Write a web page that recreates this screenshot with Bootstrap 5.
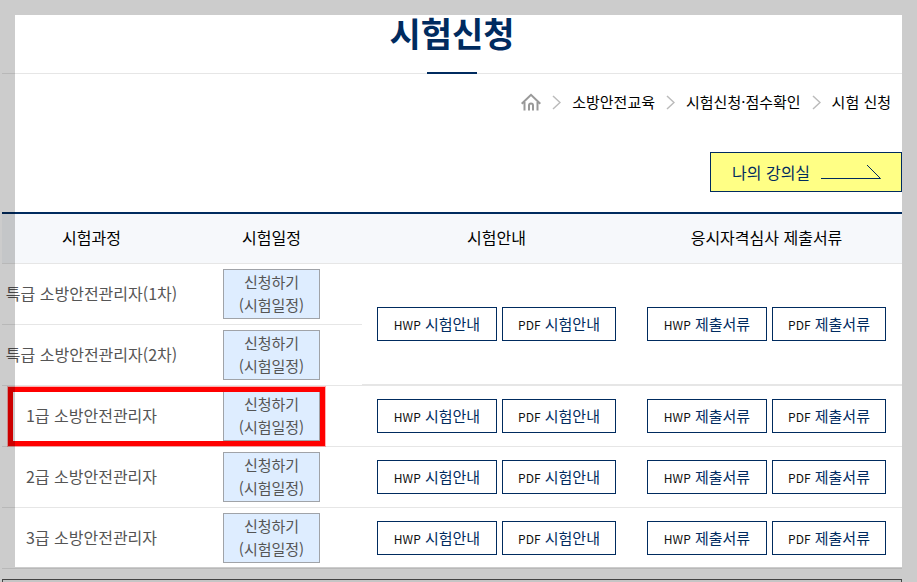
<!DOCTYPE html>
<html lang="ko">
<head>
<meta charset="utf-8">
<meta name="viewport" content="width=device-width, initial-scale=1">
<title>시험신청</title>
<link href="https://cdn.jsdelivr.net/npm/bootstrap@5.3.0/dist/css/bootstrap.min.css" rel="stylesheet">
<style>
:root { --navy: #002b5f; --rule: #e6e6e6; }
body { font-family: "Noto Sans CJK KR", sans-serif; font-size: 16px; font-weight: 400; color: #555; background: #fff; min-height: 100vh; overflow-x: hidden; }
.page-wrap { margin: 0 15px 0 2px; }
.page-head { height: 74px; border-bottom: 1px solid var(--rule); }
.page-head h1 { font-size: 34px; line-height: 40px; font-weight: 700; color: var(--navy); margin: 13px 0 0; }
.title-bar { width: 50px; height: 2px; background: var(--navy); margin: auto auto -1px; }
.crumbs { height: 56px; padding-right: 11px; gap: 11px; font-size: 15px; color: #000; }
.crumbs a { color: #000; text-decoration: none; }
.my-room { width: 192px; height: 40px; margin-top: 22px; background: #ffff85; border: 1px solid var(--navy); color: var(--navy); padding: 0 20px 0 21px; text-decoration: none; line-height: 24px; }
.exam-table { table-layout: fixed; border-top: 2px solid var(--navy); margin: 20px 0 0; color: #555; border-collapse: separate; border-spacing: 0; }
.exam-table th { background: #f6f8fb; color: #000; font-weight: inherit; height: 50px; padding: 0 1px 4px 0; border-bottom: 1px solid var(--rule); line-height: 24px; }
.exam-table td { height: 61px; padding: 0 1px 0 0; border-bottom: 1px solid var(--rule); white-space: nowrap; line-height: 24px; }
.exam-table td:first-child { padding-bottom: 2px; }
.exam-table td.shared { border-bottom-width: 2px; padding-bottom: 0; }
.col-a { width: 20%; } .col-b { width: 30%; }
.apply { width: 97px; height: 50px; background: #deedff; border: 1px solid #a0a3a8; color: #555; font-size: 15px; font-weight: inherit; line-height: 23px; padding: 0 0 5px; }
.doc { height: 34px; border: 1px solid var(--navy); background: #fff; color: var(--navy); font-size: 15px; font-weight: inherit; line-height: 20px; padding: 0; }
.doc small { font-size: 12px; color: #111; }
.doc-hwp { width: 120px; } .doc-pdf { width: 114px; }
.doc-pair { gap: 5px; }
.marker { position: absolute; left: 6px; top: 1px; bottom: 0; width: calc(200% - 43px); border: 5px solid #f00; outline: 1px solid rgba(255,0,0,.3); pointer-events: none; z-index: 2; }
.next-box { height: 3px; margin-top: 10px; border: 1px solid #555; border-bottom: 0; background: #f7f7f7; }
.veil { position: fixed; inset: 0; border: 15px solid rgba(0,0,0,.2); pointer-events: none; z-index: 10; }
</style>
<script src="https://cdn.jsdelivr.net/npm/bootstrap@5.3.0/dist/js/bootstrap.bundle.min.js"></script>
</head>
<body>
<div class="page-wrap">
  <header class="page-head d-flex flex-column text-center">
    <h1>시험신청</h1>
    <div class="title-bar"></div>
  </header>
  <nav class="crumbs d-flex justify-content-end align-items-center" aria-label="현재 위치">
    <a href="#" class="d-flex" aria-label="홈"><svg width="20" height="18" viewBox="0 0 20 18" fill="none" stroke="#999" stroke-width="2"><path d="M.7 10.7 10 1.8l9.300 8.900M3.500 9v8.500M16.500 9v8.500M8 17.500V12.500q0-2 2-2t2 2v5"/></svg></a>
    <svg width="9" height="15" viewBox="0 0 9 15" fill="none" stroke="#bbb" stroke-width="1.500"><path d="M1 1l7 6.500L1 14"/></svg>
    <a href="#">소방안전교육</a>
    <svg width="9" height="15" viewBox="0 0 9 15" fill="none" stroke="#bbb" stroke-width="1.500"><path d="M1 1l7 6.500L1 14"/></svg>
    <a href="#">시험신청·점수확인</a>
    <svg width="9" height="15" viewBox="0 0 9 15" fill="none" stroke="#bbb" stroke-width="1.500"><path d="M1 1l7 6.500L1 14"/></svg>
    <a href="#">시험 신청</a>
  </nav>
  <a href="#" class="my-room d-flex justify-content-between align-items-center ms-auto">나의 강의실
    <svg width="60" height="15" viewBox="0 0 60 15" fill="none" stroke="#002b5f"><path d="M0 13.500h59.500L46 0"/></svg>
  </a>
  <main>
  <table class="exam-table w-100 text-center align-middle">
    <colgroup><col class="col-a"><col class="col-a"><col class="col-b"><col class="col-b"></colgroup>
    <thead><tr><th scope="col">시험과정</th><th scope="col">시험일정</th><th scope="col">시험안내</th><th scope="col">응시자격심사 제출서류</th></tr></thead>
    <tbody>
      <tr>
        <td>특급 소방안전관리자(1차)</td>
        <td><button type="button" class="apply">신청하기<br>(시험일정)</button></td>
        <td rowspan="2" class="shared"><div class="doc-pair d-flex justify-content-center"><button type="button" class="doc doc-hwp"><small>HWP</small> 시험안내</button><button type="button" class="doc doc-pdf"><small>PDF</small> 시험안내</button></div></td>
        <td rowspan="2" class="shared"><div class="doc-pair d-flex justify-content-center"><button type="button" class="doc doc-hwp"><small>HWP</small> 제출서류</button><button type="button" class="doc doc-pdf"><small>PDF</small> 제출서류</button></div></td>
      </tr>
      <tr>
        <td>특급 소방안전관리자(2차)</td>
        <td><button type="button" class="apply">신청하기<br>(시험일정)</button></td>
      </tr>
      <tr>
        <td class="position-relative">1급 소방안전관리자<span class="marker"></span></td>
        <td><button type="button" class="apply">신청하기<br>(시험일정)</button></td>
        <td><div class="doc-pair d-flex justify-content-center"><button type="button" class="doc doc-hwp"><small>HWP</small> 시험안내</button><button type="button" class="doc doc-pdf"><small>PDF</small> 시험안내</button></div></td>
        <td><div class="doc-pair d-flex justify-content-center"><button type="button" class="doc doc-hwp"><small>HWP</small> 제출서류</button><button type="button" class="doc doc-pdf"><small>PDF</small> 제출서류</button></div></td>
      </tr>
      <tr>
        <td>2급 소방안전관리자</td>
        <td><button type="button" class="apply">신청하기<br>(시험일정)</button></td>
        <td><div class="doc-pair d-flex justify-content-center"><button type="button" class="doc doc-hwp"><small>HWP</small> 시험안내</button><button type="button" class="doc doc-pdf"><small>PDF</small> 시험안내</button></div></td>
        <td><div class="doc-pair d-flex justify-content-center"><button type="button" class="doc doc-hwp"><small>HWP</small> 제출서류</button><button type="button" class="doc doc-pdf"><small>PDF</small> 제출서류</button></div></td>
      </tr>
      <tr>
        <td>3급 소방안전관리자</td>
        <td><button type="button" class="apply">신청하기<br>(시험일정)</button></td>
        <td><div class="doc-pair d-flex justify-content-center"><button type="button" class="doc doc-hwp"><small>HWP</small> 시험안내</button><button type="button" class="doc doc-pdf"><small>PDF</small> 시험안내</button></div></td>
        <td><div class="doc-pair d-flex justify-content-center"><button type="button" class="doc doc-hwp"><small>HWP</small> 제출서류</button><button type="button" class="doc doc-pdf"><small>PDF</small> 제출서류</button></div></td>
      </tr>
    </tbody>
  </table>
  <div class="next-box"></div>
  </main>
</div>
<div class="veil"></div>
</body>
</html>
